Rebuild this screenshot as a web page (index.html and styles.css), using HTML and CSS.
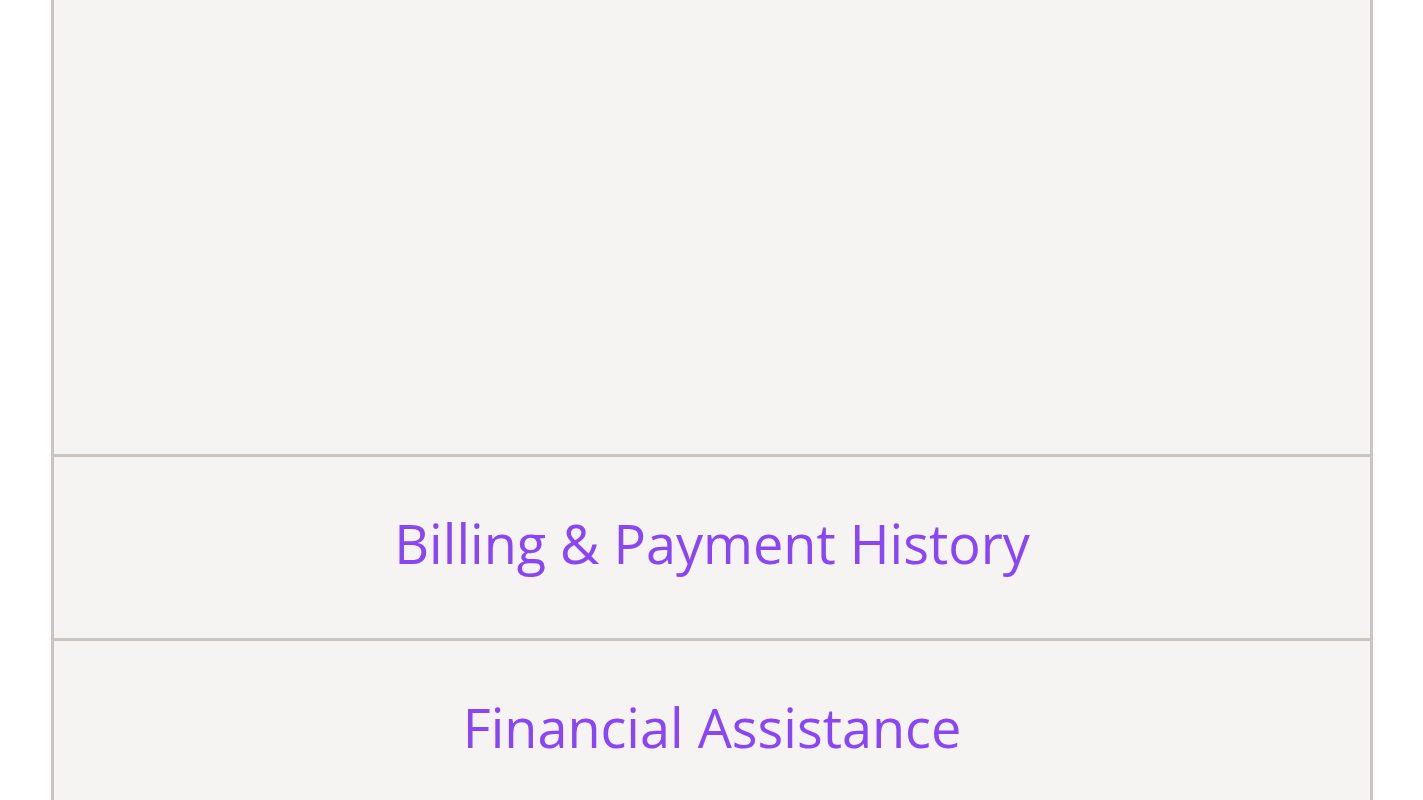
FILE: index.html
```html
<!DOCTYPE html>
<html>
<head>
<meta charset="utf-8">
<link rel="stylesheet" href="styles.css">
</head>
<body>
<div class="panel">
  <div class="panel-top"></div>
  <div class="panel-row"><a class="panel-link">Billing &amp; Payment History</a></div>
  <div class="panel-row"><a class="panel-link">Financial Assistance</a></div>
</div>
</body>
</html>
```
FILE: styles.css
```css
html, body {
  margin: 0;
  padding: 0;
  background: #ffffff;
  overflow: hidden;
}
.panel {
  margin-left: 51px;
  width: 1316px;
  background: #f6f4f3;
  border-left: 3px solid #cbc4bf;
  border-right: 3px solid #cbc4bf;
}
.panel-top {
  height: 454px;
}
.panel-row {
  height: 181px;
  border-top: 3px solid #cbc4bf;
  display: flex;
  align-items: center;
  justify-content: center;
}
.panel-link {
  font-family: "Open Sans", sans-serif;
  font-size: 54px;
  line-height: 1;
  font-weight: 400;
  color: #8a45f6;
  text-decoration: none;
  padding-bottom: 9px;
}
```
